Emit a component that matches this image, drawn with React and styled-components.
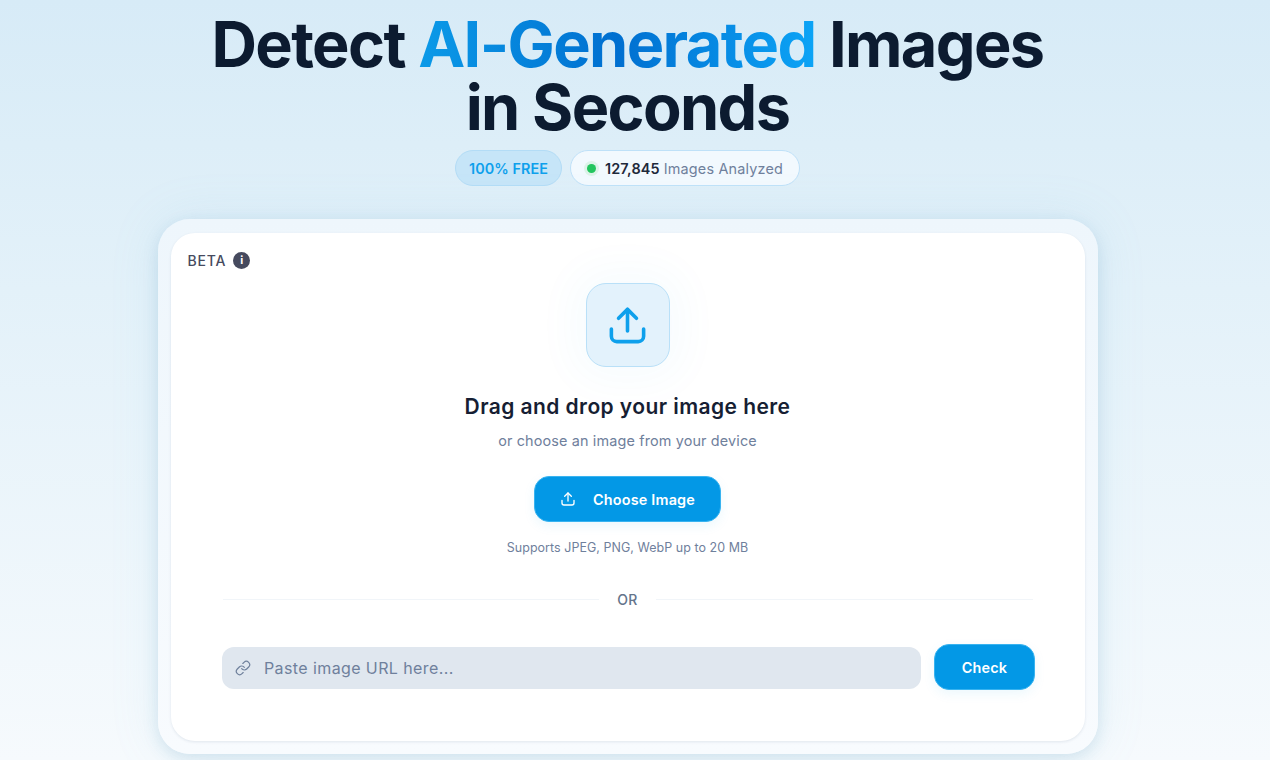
import React from "react";
import styled, { createGlobalStyle } from "styled-components";
import { Link } from "lucide-react";

const GlobalStyle = createGlobalStyle`
  html, body {
    margin: 0;
    padding: 0;
    height: 100%;
  }
  body {
    height: 760px;
    overflow: hidden;
    font-family: Inter, "Liberation Sans", sans-serif;
    font-optical-sizing: none;
    background: linear-gradient(180deg, #d7ebf7 0%, #e3f1f9 38%, #f6fafd 100%);
  }
`;

const Page = styled.main`
  width: 1255px;
  display: flex;
  flex-direction: column;
  align-items: center;
  padding-top: 13px;
`;

const Title = styled.h1`
  margin: 0;
  width: 900px;
  text-align: center;
  font-size: 63px;
  line-height: 63px;
  font-weight: 700;
  letter-spacing: -1.62px;
  color: #0c1b30;
`;

const Accent = styled.span`
  background: linear-gradient(90deg, #0b9ae8 0%, #006fd0 50%, #0ca4f6 100%);
  -webkit-background-clip: text;
  background-clip: text;
  color: transparent;
`;

const Badges = styled.div`
  display: flex;
  gap: 8px;
  margin-top: 11px;
`;

const Badge = styled.div`
  display: flex;
  align-items: center;
  height: 36px;
  box-sizing: border-box;
  padding: ${p => (p.$free ? "0 13px" : "0 16px 0 13px")};
  border-radius: 18px;
  font-size: 14.4px;
  letter-spacing: ${p => (p.$free ? "0.05px" : "0.18px")};
  border: 1px solid ${p => (p.$free ? "#b3dcf6" : "#bfe1f8")};
  background: ${p => (p.$free ? "#c6e5f8" : "#f2f9fe")};
  color: ${p => (p.$free ? "#0ea0ec" : "#6f809c")};
  font-weight: ${p => (p.$free ? 600 : 400)};
`;

const Dot = styled.span`
  width: 9px;
  height: 9px;
  margin: 0 9px 0 3px;
  border-radius: 50%;
  background: #22c55e;
  box-shadow: 0 0 0 3px #dcf3e8;
`;

const Count = styled.strong`
  font-weight: 600;
  color: #1e293b;
  margin-right: 4px;
`;

const Shell = styled.section`
  width: 940px;
  height: 535px;
  box-sizing: border-box;
  margin-top: 33px;
  padding: 14px 13px 13px;
  border-radius: 32px;
  background: linear-gradient(180deg, #eef6fc 0%, #f8fbfe 100%);
  box-shadow: 0 5px 16px rgba(40, 120, 160, 0.15), 0 0 50px rgba(120, 190, 225, 0.13);
`;

const Card = styled.div`
  position: relative;
  height: 100%;
  box-sizing: border-box;
  padding-top: 50px;
  border-radius: 24px;
  background: #fff;
  box-shadow: 0 1px 3px rgba(15, 50, 90, 0.1);
  display: flex;
  flex-direction: column;
  align-items: center;
`;

const Beta = styled.div`
  position: absolute;
  top: 19px;
  left: 17px;
  display: flex;
  align-items: center;
  gap: 7px;
  font-size: 14px;
  font-weight: 500;
  letter-spacing: 0.8px;
  color: #464a5e;
`;

const InfoDot = styled.span`
  width: 17px;
  height: 17px;
  border-radius: 50%;
  background: #464a5e;
  color: #fff;
  font-size: 11px;
  font-weight: 700;
  line-height: 17px;
  text-align: center;
  letter-spacing: 0;
`;

const UploadTile = styled.div`
  width: 84px;
  height: 84px;
  box-sizing: border-box;
  display: flex;
  align-items: center;
  justify-content: center;
  border-radius: 20px;
  border: 1px solid #b9e0f8;
  background: #e3f2fc;
  box-shadow: 0 0 40px 16px rgba(14, 165, 233, 0.03);
`;

const DropTitle = styled.h2`
  margin: 26px 0 0;
  font-size: 21px;
  line-height: 28px;
  font-weight: 600;
  letter-spacing: 0.43px;
  color: #161e33;
`;

const DropHint = styled.p`
  margin: 10px 0 0;
  font-size: 14.4px;
  line-height: 20px;
  letter-spacing: 0.15px;
  color: #6f809c;
`;

const PrimaryButton = styled.button`
  display: flex;
  align-items: center;
  justify-content: center;
  gap: 17px;
  box-sizing: border-box;
  height: 46px;
  width: ${p => p.$width}px;
  padding: 0;
  border: 1px solid #38b3f0;
  border-radius: 15px;
  background: #0398e6;
  color: #fff;
  font-family: inherit;
  font-size: 14.4px;
  font-weight: 600;
  letter-spacing: 0.2px;
  box-shadow: 0 4px 12px rgba(14, 165, 233, 0.08);
`;

const ChooseButton = styled(PrimaryButton)`
  margin-top: 25px;
`;

const Supports = styled.p`
  margin: 17px 0 0;
  font-size: 12.48px;
  line-height: 18px;
  letter-spacing: 0.05px;
  color: #6f809c;
`;

const Divider = styled.div`
  width: 810px;
  margin-top: 34px;
  display: flex;
  align-items: center;
  gap: 18px;
  font-size: 14px;
  font-weight: 500;
  letter-spacing: 0.3px;
  color: #64748b;
  &::before,
  &::after {
    content: "";
    flex: 1;
    height: 1px;
    background: #f1f5f9;
  }
`;

const UrlRow = styled.form`
  width: 813px;
  margin-top: 36px;
  margin-left: 2px;
  display: flex;
  align-items: center;
  gap: 13px;
`;

const UrlField = styled.div`
  flex: 1;
  height: 42px;
  margin-top: 2px;
  display: flex;
  align-items: center;
  gap: 13px;
  padding-left: 13px;
  border-radius: 12px;
  background: #e0e7ef;
  color: #6f809c;
  font-size: 16px;
  letter-spacing: 0.4px;
`;

const UploadGlyph = ({ size, width }) => (
  <svg width={size} height={size} viewBox="0 0 24 24" fill="none" stroke="currentColor" strokeWidth={width} strokeLinecap="round" strokeLinejoin="round">
    <path d="M12 15V3" />
    <path d="M7 8l5-5 5 5" />
    <path d="M3 14v4a3 3 0 0 0 3 3h12a3 3 0 0 0 3-3v-4" />
  </svg>
);

const TileIcon = styled.span`
  display: flex;
  color: #0ea0ec;
`;

export default function App() {
  return (
    <Page>
      <GlobalStyle />
      <Title>
        Detect <Accent>AI-Generated</Accent> Images
        <br />
        in Seconds
      </Title>
      <Badges>
        <Badge $free>100% FREE</Badge>
        <Badge>
          <Dot />
          <Count>127,845</Count> Images Analyzed
        </Badge>
      </Badges>
      <Shell>
        <Card>
          <Beta>
            BETA <InfoDot>i</InfoDot>
          </Beta>
          <UploadTile>
            <TileIcon>
              <UploadGlyph size={43} width={2} />
            </TileIcon>
          </UploadTile>
          <DropTitle>Drag and drop your image here</DropTitle>
          <DropHint>or choose an image from your device</DropHint>
          <ChooseButton $width={187} type="button">
            <UploadGlyph size={16} width={2} />
            Choose Image
          </ChooseButton>
          <Supports>Supports JPEG, PNG, WebP up to 20 MB</Supports>
          <Divider>OR</Divider>
          <UrlRow>
            <UrlField>
              <Link size={16} strokeWidth={1.8} />
              Paste image URL here...
            </UrlField>
            <PrimaryButton $width={101} type="button">
              Check
            </PrimaryButton>
          </UrlRow>
        </Card>
      </Shell>
    </Page>
  );
}
